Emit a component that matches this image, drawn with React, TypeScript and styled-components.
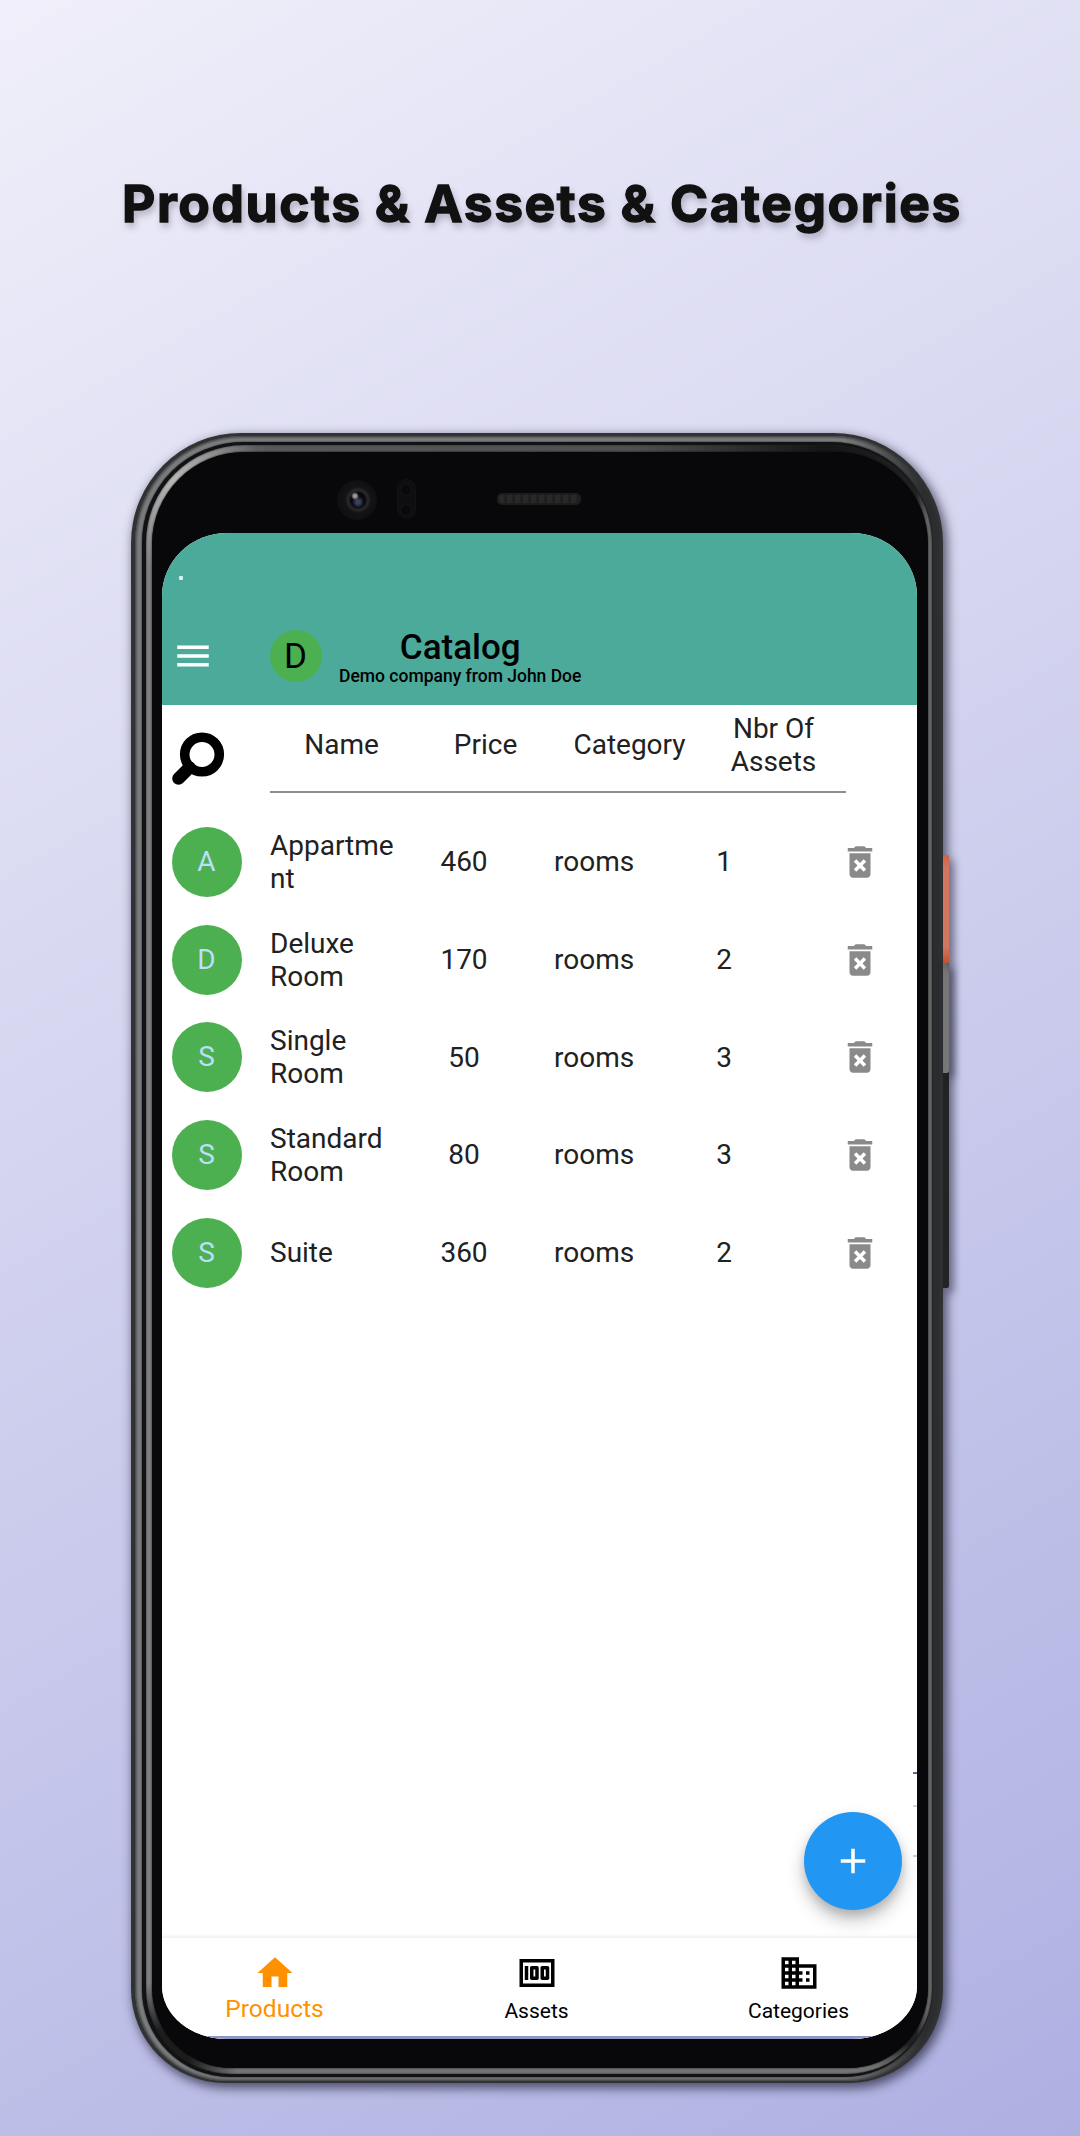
import React from "react";
import styled, { createGlobalStyle } from "styled-components";

const GlobalStyle = createGlobalStyle`
  *, *::before, *::after { box-sizing: border-box; }
  body { margin: 0; font-family: Roboto, "Liberation Sans", sans-serif; }
`;

const Page = styled.main`
  width: 1080px;
  height: 2136px;
  overflow: hidden;
  display: flex;
  flex-direction: column;
  background: linear-gradient(150deg, #f0effa 0%, #aeb0e2 100%);
`;

const Headline = styled.h1`
  margin: 0;
  height: 433px;
  padding: 172px 0 0 4px;
  text-align: center;
  font: 700 51.5px/62px Inter, sans-serif;
  letter-spacing: 1.6px;
  word-spacing: -0.6px;
  white-space: nowrap;
  color: #111;
  -webkit-text-stroke: 1.4px #111;
  text-shadow: 2px 5px 7px rgba(60, 60, 80, 0.35);
`;

const Frame = styled.div`
  position: relative;
  width: 812px;
  height: 1650px;
  margin-left: 131px;
  padding: 3px 3px 2px 4px;
  border-radius: 110px 110px 94px 94px;
  background: #303233;
  box-shadow: 3px 4px 11px 1px rgba(30, 30, 50, 0.7);
`;

const OuterRim = styled.div`
  height: 100%;
  padding: 6px 8px 4px 7px;
  border-radius: 107px 107px 92px 92px;
  background: linear-gradient(90deg, #7c7e80 0%, #7c7e80 88%, #2b2d2e 98%);
  box-shadow: inset 0 0 3px 1px #303233;
`;

const Groove = styled.div`
  height: 100%;
  padding: 3px 0 3px 4px;
  border-radius: 101px 101px 88px 88px;
  background: #111213;
  box-shadow: 0 0 2px 0 #111213;
`;

const InnerRim = styled.div`
  height: 100%;
  padding: 7px 4px 6px 6px;
  border-radius: 98px 98px 85px 85px;
  background:
    radial-gradient(circle at 26px 34px, #b8b8b8 0, rgba(184, 184, 184, 0) 90px),
    radial-gradient(circle at 12px calc(100% - 12px), #1c1c1c 0 30px, rgba(28, 28, 28, 0) 80px),
    linear-gradient(0deg, #747474 0, #747474 7px, rgba(90, 90, 90, 0) 30px),
    linear-gradient(90deg, #808080 0%, #585858 16%, #505050 62%, #151515 86%, #222 98%, #686868 99.4%);
  box-shadow: inset 0 0 2px 0 #222;
`;

const Bezel = styled.div`
  position: relative;
  height: 100%;
  padding: 81px 11px 30px 10px;
  border-radius: 92px 92px 80px 80px;
  background: #08080a;
  box-shadow: 0 0 2px 0 #08080a;
`;

const Camera = styled.div`
  position: absolute;
  left: 185px;
  top: 28px;
  width: 40px;
  height: 40px;
  border-radius: 50%;
  background:
    radial-gradient(circle at 18px 16px, #999 0 1.5px, transparent 4px),
    radial-gradient(circle at 21px 22px, #39415f 0 2px, transparent 6px),
    radial-gradient(circle at 21px 20px, #09090d 0 7px, #2a2a2e 10px, #131315 13px, #101012 19px);
`;

const Sensor = styled.div`
  position: absolute;
  left: 245px;
  top: 27px;
  width: 19px;
  height: 40px;
  border: 1px solid #121214;
  border-radius: 10px;
  background:
    radial-gradient(circle at 8px 10px, #09090a 4px, #121214 6px, transparent 7px),
    radial-gradient(circle at 8px 30px, #09090a 4px, #121214 6px, transparent 7px),
    #0e0e10;
`;

const Speaker = styled.div`
  position: absolute;
  left: 345px;
  top: 41px;
  width: 84px;
  height: 12px;
  border: 2px solid #1d1d1e;
  border-radius: 5px;
  background: repeating-linear-gradient(90deg, #292929 0 4px, #1f1f1f 6px 8px);
`;

const SideKey = styled.div<{ $top: number; $height: number; $fill: string }>`
  position: absolute;
  left: 812px;
  top: ${(p) => p.$top}px;
  width: 6px;
  height: ${(p) => p.$height}px;
  border-radius: 0 2px 2px 0;
  background: ${(p) => p.$fill};
  box-shadow: 4px 5px 8px rgba(30, 30, 50, 0.6);
`;

const Screen = styled.div`
  position: relative;
  width: 755px;
  height: 1506px;
  overflow: hidden;
  display: flex;
  flex-direction: column;
  border-radius: 65px 65px 65px 65px / 63px 63px 53px 53px;
  background: #fff;
`;

const AppBar = styled.header`
  flex: none;
  height: 172px;
  padding: 97px 0 0 10px;
  display: flex;
  align-items: flex-start;
  background: #4caa9b;
`;

const MenuButton = styled.div`
  width: 42px;
  height: 42px;
  margin-top: 5px;
  color: #fff;
`;

const Glyph = styled.svg`
  display: block;
  width: 42px;
  height: 42px;
  fill: currentColor;
`;

const CompanyBadge = styled.div`
  width: 52px;
  height: 52px;
  margin-left: 56px;
  padding-right: 1px;
  border-radius: 50%;
  background: #4caf50;
  color: #000;
  font-size: 35px;
  line-height: 54px;
  text-align: center;
`;

const Titles = styled.div`
  margin-left: 17px;
  text-align: center;
  font-weight: 500;
  color: #000;
  white-space: nowrap;
`;

const Title = styled.div`
  font-size: 35px;
  line-height: 36px;
`;

const Subtitle = styled.div`
  font-size: 17.5px;
  line-height: 20px;
`;

const Speck = styled.i`
  position: absolute;
  left: 17px;
  top: 43px;
  width: 4px;
  height: 4px;
  border-radius: 1px;
  background: #dcefec;
`;

const ListHead = styled.div`
  flex: none;
  height: 88px;
  padding-left: 10px;
  display: flex;
`;

const SearchIcon = styled.svg`
  flex: none;
  width: 54px;
  height: 54px;
  margin-top: 27px;
  margin-right: 44px;
`;

const HeadCells = styled.div`
  width: 576px;
  padding-bottom: 7px;
  display: grid;
  grid-template-columns: repeat(4, 144px);
  align-items: center;
  border-bottom: 2px solid #8e8e8e;
  font-size: 28px;
  line-height: 33px;
  color: #212121;
`;

const HeadCell = styled.div`
  padding: 0 13px 0 12px;
  text-align: center;
`;

const Rows = styled.div`
  flex: 1;
  padding-top: 20px;
`;

const Row = styled.div`
  height: 97.7px;
  padding-left: 10px;
  display: grid;
  grid-template-columns: 98px 125px 138px 166px 50px 136px;
  align-items: center;
  font-size: 28px;
  line-height: 33px;
  color: #212121;
`;

const Avatar = styled.div`
  width: 70px;
  height: 70px;
  padding-right: 1px;
  border-radius: 50%;
  background: #4caf50;
  color: #bbdefb;
  line-height: 70px;
  text-align: center;
`;

const Name = styled.div`
  overflow-wrap: anywhere;
`;

const Centered = styled.div`
  text-align: center;
`;

const Category = styled.div`
  padding-left: 21px;
`;

const Remove = styled.div`
  display: flex;
  justify-content: flex-end;
  padding-right: 4px;
  color: #8a8a8a;
`;

const AddButton = styled.div`
  position: absolute;
  left: 642px;
  top: 1279px;
  width: 98px;
  height: 98px;
  display: flex;
  align-items: center;
  justify-content: center;
  border-radius: 50%;
  background: #2196f3;
  color: #fff;
  box-shadow: 0 10px 18px rgba(0, 0, 0, 0.24), 0 5px 8px rgba(0, 0, 0, 0.12);
`;

const EdgeMark = styled.i<{ $top: number; $tint: string }>`
  position: absolute;
  right: 0;
  top: ${(p) => p.$top}px;
  width: 4px;
  height: 2px;
  background: ${(p) => p.$tint};
`;

const Nav = styled.nav`
  flex: none;
  width: 786px;
  height: 101px;
  margin-left: -18.5px;
  padding-top: 14px;
  display: grid;
  grid-template-columns: repeat(3, 262px);
  border-bottom: 3px solid #8f96c3;
  background: #fff;
  box-shadow: 0 -1px 4px rgba(0, 0, 0, 0.09);
`;

const NavItem = styled.div<{ $active?: boolean }>`
  display: flex;
  flex-direction: column;
  align-items: center;
  color: ${(p) => (p.$active ? "#ff9100" : "#000")};
  font-size: ${(p) => (p.$active ? 24.5 : 21)}px;
  line-height: 30px;
`;

const NavLabel = styled.span<{ $active?: boolean }>`
  margin-top: ${(p) => (p.$active ? 0 : 1.5)}px;
`;

const icons = {
  menu: "M3 18h18v-2H3v2zm0-5h18v-2H3v2zm0-7v2h18V6H3z",
  remove:
    "M6 19c0 1.1.9 2 2 2h8c1.1 0 2-.9 2-2V7H6v12zm2.46-7.12l1.41-1.41L12 12.59l2.12-2.12 1.41 1.41L13.41 14l2.12 2.12-1.41 1.41L12 15.41l-2.12 2.12-1.41-1.41L10.59 14l-2.13-2.12zM15.5 4l-1-1h-5l-1 1H5v2h14V4z",
  add: "M19 13h-6v6h-2v-6H5v-2h6V5h2v6h6v2z",
  home: "M10 20v-6h4v6h5v-8h3L12 3 2 12h3v8z",
  money:
    "M5 8h2v8H5zm7 0H9c-.55 0-1 .45-1 1v6c0 .55.45 1 1 1h3c.55 0 1-.45 1-1V9c0-.55-.45-1-1-1zm-1 6h-1v-4h1v4zm7-6h-3c-.55 0-1 .45-1 1v6c0 .55.45 1 1 1h3c.55 0 1-.45 1-1V9c0-.55-.45-1-1-1zm-1 6h-1v-4h1v4zM2 4v16h20V4H2zm2 14V6h16v12H4z",
  business:
    "M12 7V3H2v18h20V7H12zM6 19H4v-2h2v2zm0-4H4v-2h2v2zm0-4H4V9h2v2zm0-4H4V5h2v2zm4 12H8v-2h2v2zm0-4H8v-2h2v2zm0-4H8V9h2v2zm0-4H8V5h2v2zm10 12h-8v-2h2v-2h-2v-2h2v-2h-2V9h8v10zm-2-8h-2v2h2v-2zm0 4h-2v2h2v-2z",
};

const Icon = ({ name }: { name: keyof typeof icons }) => (
  <Glyph viewBox="0 0 24 24">
    <path d={icons[name]} />
  </Glyph>
);

const products = [
  { name: "Appartment", price: 460, category: "rooms", assets: 1 },
  { name: "Deluxe Room", price: 170, category: "rooms", assets: 2 },
  { name: "Single Room", price: 50, category: "rooms", assets: 3 },
  { name: "Standard Room", price: 80, category: "rooms", assets: 3 },
  { name: "Suite", price: 360, category: "rooms", assets: 2 },
];

const tabs: { label: string; icon: keyof typeof icons }[] = [
  { label: "Products", icon: "home" },
  { label: "Assets", icon: "money" },
  { label: "Categories", icon: "business" },
];

export default function App() {
  return (
    <Page>
      <GlobalStyle />
      <Headline>Products &amp; Assets &amp; Categories</Headline>
      <Frame>
        <SideKey $top={530} $height={325} $fill="#222324" />
        <SideKey $top={530} $height={110} $fill="#777" />
        <SideKey $top={422} $height={108} $fill="linear-gradient(#d2623f, #d27660 12px, #d27660 92px, #c4502f)" />
        <OuterRim>
          <Groove>
            <InnerRim>
              <Bezel>
                <Camera />
                <Sensor />
                <Speaker />
                <Screen>
                  <AppBar>
                    <Speck />
                    <MenuButton>
                      <Icon name="menu" />
                    </MenuButton>
                    <CompanyBadge>D</CompanyBadge>
                    <Titles>
                      <Title>Catalog</Title>
                      <Subtitle>Demo company from John Doe</Subtitle>
                    </Titles>
                  </AppBar>
                  <ListHead>
                    <SearchIcon viewBox="0 0 54 54" fill="none" stroke="#000">
                      <circle cx="30" cy="22.5" r="17.3" strokeWidth="9.6" />
                      <path d="M17.5 35.5 6.5 46.5" strokeWidth="12.5" strokeLinecap="round" />
                    </SearchIcon>
                    <HeadCells>
                      {["Name", "Price", "Category", "Nbr Of Assets"].map((label) => (
                        <HeadCell key={label}>{label}</HeadCell>
                      ))}
                    </HeadCells>
                  </ListHead>
                  <Rows>
                    {products.map((product) => (
                      <Row key={product.name}>
                        <Avatar>{product.name[0]}</Avatar>
                        <Name>{product.name}</Name>
                        <Centered>{product.price}</Centered>
                        <Category>{product.category}</Category>
                        <Centered>{product.assets}</Centered>
                        <Remove>
                          <Icon name="remove" />
                        </Remove>
                      </Row>
                    ))}
                  </Rows>
                  <Nav>
                    {tabs.map((tab, i) => (
                      <NavItem key={tab.label} $active={i === 0}>
                        <Icon name={tab.icon} />
                        <NavLabel $active={i === 0}>{tab.label}</NavLabel>
                      </NavItem>
                    ))}
                  </Nav>
                  <EdgeMark $top={1239} $tint="#7a5a86" />
                  <EdgeMark $top={1272} $tint="#d8cfe0" />
                  <EdgeMark $top={1322} $tint="#cfcfcf" />
                  <AddButton>
                    <Icon name="add" />
                  </AddButton>
                </Screen>
              </Bezel>
            </InnerRim>
          </Groove>
        </OuterRim>
      </Frame>
    </Page>
  );
}
